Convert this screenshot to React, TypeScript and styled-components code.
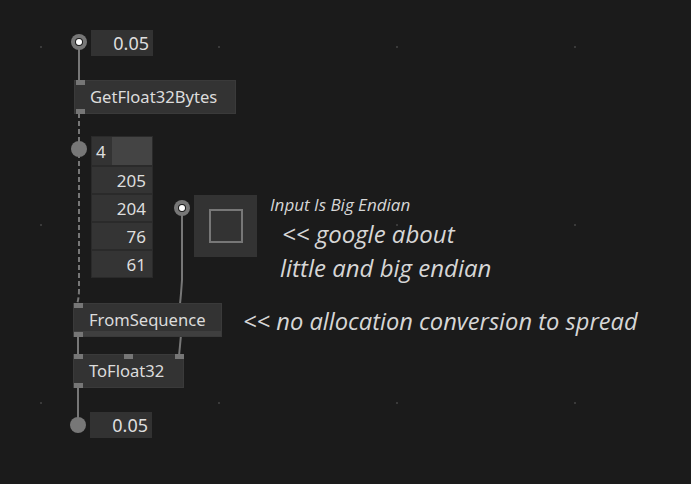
import React from "react";
import styled, {createGlobalStyle} from "styled-components";

const Global = createGlobalStyle`
  html, body {
    margin: 0;
    padding: 0;
    background: #1b1b1b;
  }
`;

const Canvas = styled.div`
  position: relative;
  width: 691px;
  height: 484px;
  overflow: hidden;
  background: #1b1b1b;
  font-family: "Noto Sans", "Open Sans", sans-serif;
  color: #d8d8d8;
`;

const Wires = styled.svg`
  position: absolute;
  left: 0;
  top: 0;
`;

// everything that sits on the patch canvas at its own spot
const Placed = styled.div<{ $x: number; $y: number }>`
  position: absolute;
  left: ${p => p.$x}px;
  top: ${p => p.$y}px;
  display: flex;
  align-items: flex-start;
  gap: 4px;
`;

const Node = styled.div<{ $w: number }>`
  position: relative;
  width: ${p => p.$w}px;
  height: 34px;
  box-sizing: border-box;
  background: #333333;
  border: 1px solid #3a3a3a;
  display: flex;
  align-items: center;
  padding-left: 15px;
  padding-bottom: 1px;
  font-size: 16.6px;
  color: #dcdcdc;
`;

const FootBand = styled.div`
  position: absolute;
  left: 0;
  right: 0;
  bottom: 0;
  height: 5px;
  background: #3f3f3f;
`;

const Pin = styled.div<{ $x: number; $bottom?: boolean }>`
  position: absolute;
  left: ${p => p.$x}px;
  ${p => (p.$bottom ? "bottom: -1px;" : "top: -1px;")}
  width: 9px;
  height: 5px;
  background: #767676;
`;

const PinDot = styled.div<{ $hollow?: boolean; $drop?: number }>`
  flex: none;
  margin-top: ${p => p.$drop ?? 5}px;
  width: 16px;
  height: 16px;
  border-radius: 50%;
  background: #777777;
  display: flex;
  align-items: center;
  justify-content: center;
  &::after {
    content: "";
    display: ${p => (p.$hollow ? "block" : "none")};
    width: 6px;
    height: 6px;
    border-radius: 50%;
    background: #ffffff;
    box-shadow: 0 0 0 1px #1b1b1b;
  }
`;

const IoBox = styled.div`
  width: 62px;
  height: 26px;
  box-sizing: border-box;
  background: #323232;
  display: flex;
  align-items: center;
  justify-content: flex-end;
  padding-right: 4px;
  font-size: 18px;
  color: #dedede;
`;

const Spread = styled.div`
  width: 62px;
  box-sizing: border-box;
  background: #2a2a2a;
  padding: 1px;
  display: flex;
  flex-direction: column;
  gap: 2px;
`;

const CountRow = styled.div`
  height: 28px;
  background: #444444;
  display: flex;
`;

const CountCell = styled.div`
  width: 20px;
  background: #333333;
  display: flex;
  align-items: center;
  padding-left: 4px;
  box-sizing: border-box;
  font-size: 17px;
  color: #dedede;
`;

const SpreadRow = styled.div`
  height: 26px;
  background: #343434;
  display: flex;
  align-items: center;
  justify-content: flex-end;
  padding-right: 6px;
  font-size: 17px;
  color: #dedede;
`;

const Toggle = styled.div`
  width: 63px;
  height: 62px;
  background: #333333;
  display: flex;
  align-items: center;
  justify-content: center;
`;

const ToggleBox = styled.div`
  width: 34px;
  height: 34px;
  box-sizing: border-box;
  border: 2px solid #777777;
`;

const CommentBlock = styled.div`
  display: flex;
  flex-direction: column;
  gap: 4px;
`;

const Comment = styled.div<{ $size: number; $indent?: number }>`
  margin-left: ${p => p.$indent ?? 0}px;
  font-size: ${p => p.$size}px;
  line-height: ${p => Math.round(p.$size * 1.25)}px;
  font-style: italic;
  white-space: nowrap;
  color: #d6d6d6;
  font-family: "Open Sans", "Noto Sans", sans-serif;
`;

const GridDot = styled.div<{ $x: number; $y: number }>`
  position: absolute;
  left: ${p => p.$x}px;
  top: ${p => p.$y}px;
  width: 2px;
  height: 2px;
  background: #3a3a3a;
`;

const gridX = [40, 218, 396, 574];
const gridY = [46, 224, 402];
const bytes = [205, 204, 76, 61];

export default function App(): JSX.Element {
    return <Canvas>
        <Global/>
        {gridY.map(y => gridX.map(x => <GridDot key={`${x}-${y}`} $x={x} $y={y}/>))}

        <Wires width={691} height={484}>
            <g stroke="#777" strokeWidth={2} fill="none">
                <line x1={79} y1={45} x2={79} y2={82}/>
                <path d="M79 113 L79 290 Q79 298 77 304" strokeDasharray="5 3"/>
                <path d="M182 210 L182 280 Q181 295 180 304"/>
                <line x1={78} y1={335} x2={78} y2={356}/>
                <path d="M181 335 L179 356"/>
                <line x1={78} y1={386} x2={78} y2={420}/>
            </g>
        </Wires>

        <Placed $x={71} $y={30}>
            <PinDot $hollow $drop={4}/>
            <IoBox>0.05</IoBox>
        </Placed>

        <Placed $x={74} $y={80}>
            <Node $w={162}>
                GetFloat32Bytes
                <Pin $x={1}/>
                <Pin $x={1} $bottom/>
            </Node>
        </Placed>

        <Placed $x={71} $y={136}>
            <PinDot $drop={5}/>
            <Spread>
                <CountRow><CountCell>4</CountCell></CountRow>
                {bytes.map(b => <SpreadRow key={b}>{b}</SpreadRow>)}
            </Spread>
        </Placed>

        <Placed $x={174} $y={195}>
            <PinDot $hollow $drop={5}/>
            <Toggle><ToggleBox/></Toggle>
        </Placed>

        <Placed $x={270} $y={194}>
            <CommentBlock>
                <Comment $size={17}>Input Is Big Endian</Comment>
                <Comment $size={24} $indent={12}>&lt;&lt; google about</Comment>
                <Comment $size={24} $indent={10}>little and big endian</Comment>
            </CommentBlock>
        </Placed>

        <Placed $x={243} $y={306}>
            <Comment $size={23.7}>&lt;&lt; no allocation conversion to spread</Comment>
        </Placed>

        <Placed $x={73} $y={303}>
            <Node $w={149}>
                FromSequence
                <FootBand/>
                <Pin $x={0}/>
                <Pin $x={0} $bottom/>
            </Node>
        </Placed>

        <Placed $x={73} $y={354}>
            <Node $w={111}>
                ToFloat32
                <Pin $x={0}/>
                <Pin $x={50}/>
                <Pin $x={101}/>
                <Pin $x={0} $bottom/>
            </Node>
        </Placed>

        <Placed $x={70} $y={412}>
            <PinDot $drop={5}/>
            <IoBox>0.05</IoBox>
        </Placed>
    </Canvas>;
}
